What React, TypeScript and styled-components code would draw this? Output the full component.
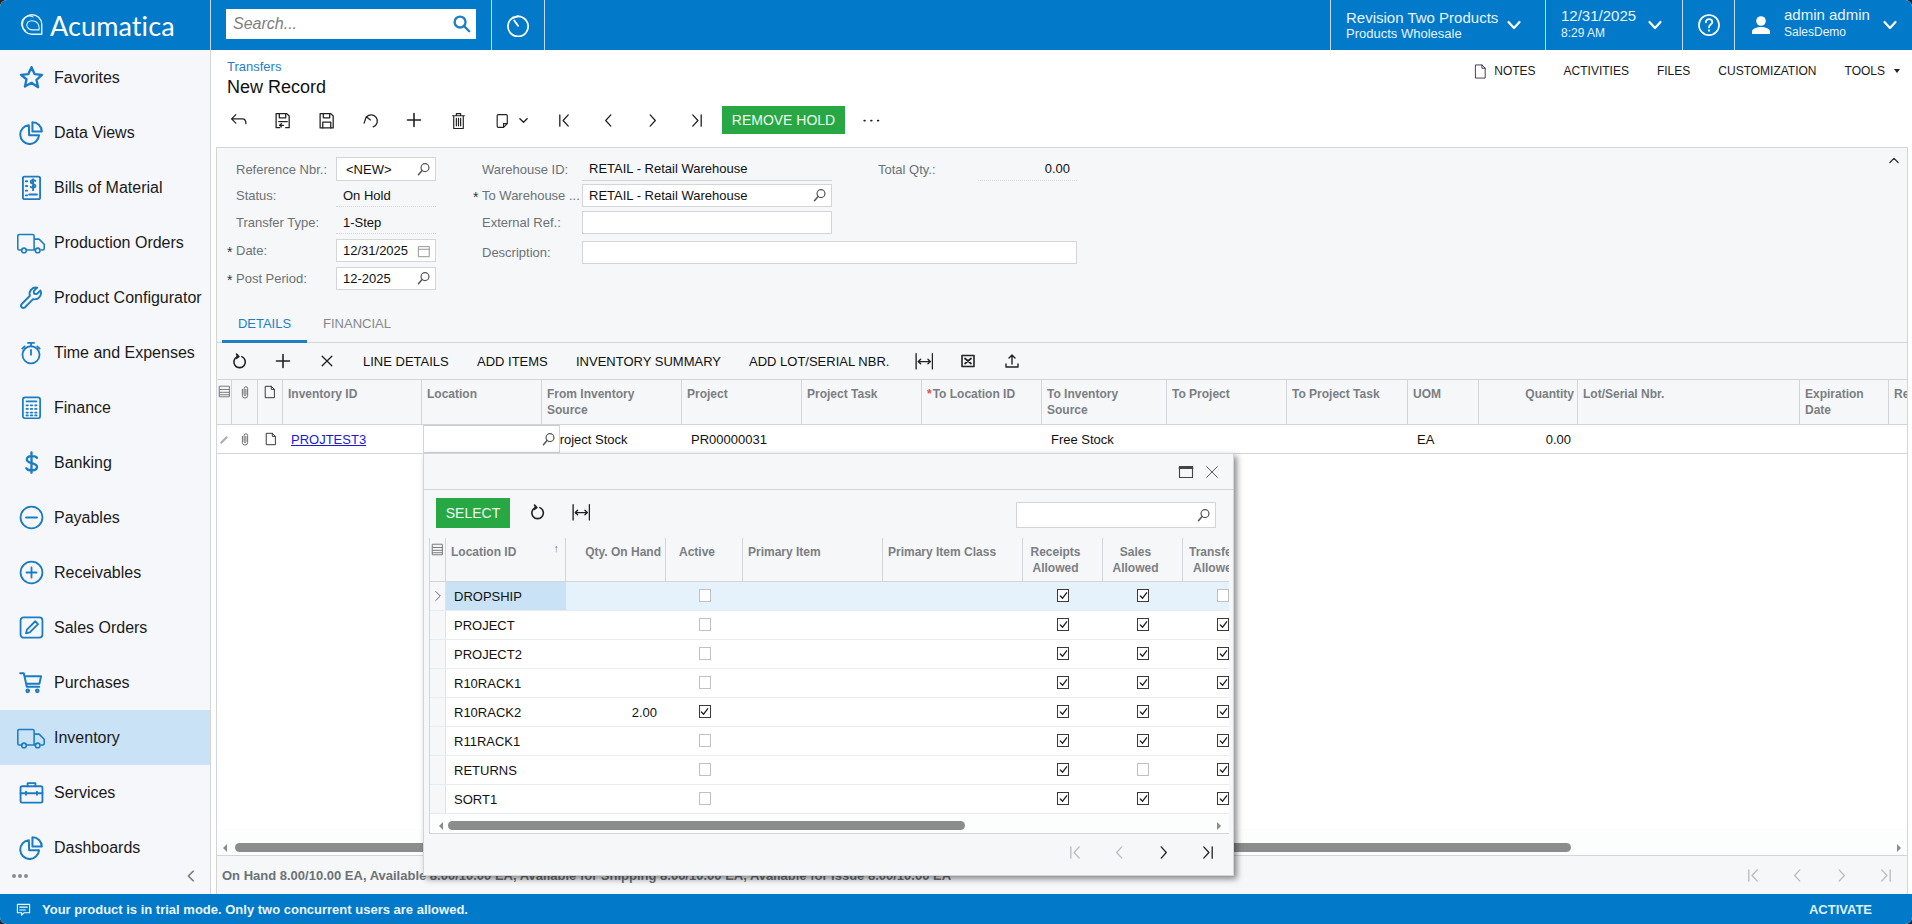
import React from "react";
import styled, { createGlobalStyle } from "styled-components";

const Global = createGlobalStyle`
  html, body { margin: 0; padding: 0; background: #26282b; overflow: hidden; }
  body { font-family: "Liberation Sans", Arial, sans-serif; font-size: 13px; color: #111; }
  * { box-sizing: border-box; }
`;

const BLUE = "#0279c9";
const LINE = "#d3d5d8";
const PANEL = "#f5f7f9";

const Frame = styled.div`
  position: relative; width: 1912px; height: 924px; display: flex; flex-direction: column;
  overflow: hidden; border-radius: 7px; background: #fff;
`;
const TopBar = styled.header`display: flex; height: 50px; background: ${BLUE}; color: #fff; flex: none;`;
const TopSection = styled.div<{ $w: number }>`
  width: ${p => p.$w}px; flex: none; display: flex; align-items: center; position: relative;
  border-left: 1px solid rgba(255,255,255,.75);
  &:first-child { border-left: none; }
`;
const TopSpacer = styled.div`flex: 1; border-left: 1px solid rgba(255,255,255,.75);`;
const LogoWrap = styled.div`display: flex; align-items: center; gap: 5px; padding-left: 19px;`;
const LogoText = styled.span`font-family: Lato, "Open Sans", sans-serif; font-size: 27px; font-weight: 400; letter-spacing: .1px; color: #fff;`;
const SearchBox = styled.div`
  width: 250px; height: 30px; margin: -3px 0 0 15px; background: #fff; display: flex; align-items: center; justify-content: space-between; padding: 0 5px 0 7px;
`;
const SearchHint = styled.span`font-size: 16px; font-style: italic; color: #7d7f82;`;
const CenterSlot = styled.div`flex: 1; display: flex; justify-content: center; align-items: center;`;
const TopTexts = styled.div<{ $pad: number; $pb: number }>`padding: 0 0 ${p => p.$pb}px ${p => p.$pad}px; flex: 1; display: flex; flex-direction: column; justify-content: center;`;
const TopMain = styled.div`font-size: 15px; line-height: 17px; white-space: nowrap; color: #e9f4fc;`;
const TopSub = styled.div<{ $s: number; $mt: number }>`font-size: ${p => p.$s}px; line-height: 17px; margin-top: ${p => p.$mt}px; white-space: nowrap; color: #e9f4fc;`;
const ChevronSlot = styled.div<{ $r: number }>`display: flex; margin-right: ${p => p.$r}px;`;
const UserSlot = styled.div`width: 49px; display: flex; justify-content: center; padding-left: 2px;`;

const Body = styled.div`flex: 1; min-height: 0; display: flex;`;
const Sidebar = styled.nav`width: 211px; flex: none; background: #f5f7fa; border-right: 1px solid ${LINE}; display: flex; flex-direction: column;`;
const NavList = styled.div`flex: 1; min-height: 0; overflow: hidden;`;
const NavItem = styled.div<{ $active?: boolean }>`
  height: 55px; display: flex; align-items: center; padding-left: 17px; font-size: 16px; color: #1a1a1a;
  background: ${p => (p.$active ? "#c9e2f6" : "transparent")};
`;
const NavIcon = styled.span`width: 28px; height: 28px; margin-right: 9px; display: flex; align-items: center; justify-content: center; flex: none; color: #1c7cc2;`;
const NavFoot = styled.div`height: 30px; flex: none; display: flex; align-items: center; justify-content: space-between; padding: 0 12px 6px 12px;`;
const NavDots = styled.span`display: flex; gap: 2px;`;
const NavDot = styled.i`width: 4px; height: 4px; border-radius: 50%; background: #8a8d90;`;

const Main = styled.main`flex: 1; min-width: 0; display: flex; flex-direction: column; padding: 0 4px 0 5px;`;
const PageHead = styled.div`height: 56px; flex: none; display: flex; justify-content: space-between; padding: 9px 8px 0 11px;`;
const Breadcrumb = styled.div`font-size: 13px; line-height: 16px; color: #1f7fc4;`;
const PageTitle = styled.h1`margin: 1px 0 0; font-size: 18px; line-height: 22px; font-weight: 400; color: #111;`;
const HeadLinks = styled.div`display: flex; gap: 28px; align-items: center; height: 26px; margin-top: -1px; font-size: 12px; color: #1a1a1a;`;
const HeadLink = styled.span`display: flex; align-items: center; gap: 6px;`;
const Caret = styled.i`width: 0; height: 0; border: 3.5px solid transparent; border-top: 4px solid #222; border-bottom: none; margin-left: 3px;`;

const Tools = styled.div`height: 41px; flex: none; display: flex; align-items: flex-start; padding-left: 0;`;
const ToolBtn = styled.span<{ $w?: number }>`width: ${p => p.$w ?? 44}px; height: 28px; flex: none; display: flex; align-items: center; justify-content: center; gap: 8px; color: #222;`;
const GreenBtn = styled.span<{ $w: number; $h: number; $ml?: number }>`
  width: ${p => p.$w}px; height: ${p => p.$h}px; flex: none; background: #28a745; color: #eef9f0; font-size: 14px; display: flex; align-items: center; justify-content: center;
  margin-left: ${p => p.$ml ?? 0}px; margin-right: ${p => p.$ml ?? 0}px;
`;
const Panel = styled.section`flex: 1; min-height: 0; display: flex; flex-direction: column; border: 1px solid ${LINE}; border-bottom: none; background: ${PANEL}; position: relative;`;
const CollapseBtn = styled.span`position: absolute; right: 7px; top: 7px; display: flex;`;

const FormArea = styled.div`height: 157px; flex: none; padding: 9px 0 0 10px; display: flex; gap: 37px;`;
const FormCol = styled.div`display: flex; flex-direction: column; gap: 3px;`;
const RightBlock = styled.div`display: flex; flex-direction: column; gap: 7px;`;
const RightTop = styled.div`display: flex; gap: 46px;`;
const Field = styled.div<{ $mt?: number; $h?: number }>`height: ${p => p.$h ?? 23}px; display: flex; align-items: center; flex: none; margin-top: ${p => p.$mt ?? 0}px;`;
const Star = styled.span`width: 9px; flex: none; font-size: 14px; color: #333; line-height: 20px; padding-top: 3px;`;
const Label = styled.span`width: 100px; flex: none; color: #6d7175; font-size: 13px; white-space: nowrap; overflow: hidden;`;
const InputBox = styled.div<{ $w: number; $pad?: number }>`
  width: ${p => p.$w}px; height: 100%; background: #fff; border: 1px solid ${LINE}; display: flex; align-items: center; justify-content: space-between;
  padding: 0 4px 0 ${p => p.$pad ?? 6}px; font-size: 13px; color: #111;
`;
const ReadValue = styled.div<{ $w: number; $line: string; $right?: boolean }>`
  width: ${p => p.$w}px; height: 100%; display: flex; align-items: center; padding: 0 7px; border-bottom: 1px ${p => p.$line} ${LINE}; font-size: 13px;
  justify-content: ${p => (p.$right ? "flex-end" : "flex-start")};
`;

const Tabs = styled.div`height: 38px; flex: none; display: flex; border-bottom: 1px solid ${LINE}; padding-left: 5px; margin-bottom: 0;`;
const Tab = styled.div<{ $active?: boolean; $w: number }>`
  width: ${p => p.$w}px; height: 38px; font-size: 13px; display: flex; align-items: flex-start; justify-content: center; padding-top: 11px;
  color: ${p => (p.$active ? "#1f7fc4" : "#85888b")}; border-bottom: 3px solid ${p => (p.$active ? "#1f7fc4" : "transparent")};
`;
const GridTools = styled.div`height: 36px; flex: none; display: flex; align-items: center; padding-left: 0; font-size: 13px; color: #111;`;
const TextTool = styled.span<{ $w: number }>`width: ${p => p.$w}px; flex: none; white-space: nowrap;`;

const GridWrap = styled.div`flex: 1; min-height: 0; display: flex; flex-direction: column; background: #fff; border-top: 1px solid ${LINE};`;
const GridRow = styled.div<{ $cols: string; $h: number; $bg?: string; $line?: string }>`
  display: grid; grid-template-columns: ${p => p.$cols}; height: ${p => p.$h}px; flex: none; background: ${p => p.$bg ?? "#fff"};
  border-bottom: 1px solid ${p => p.$line ?? LINE}; overflow: hidden;
`;
const HeadCell = styled.div<{ $align?: string }>`
  padding: 6px 3px 0 5px; font-size: 12px; line-height: 16px; font-weight: 700; color: #7b7e82; border-right: 1px solid ${LINE}; overflow: hidden; white-space: nowrap; position: relative;
  text-align: ${p => p.$align ?? "left"};
  display: flex; flex-direction: column;
`;
const ReqMark = styled.span`color: #d9534f; margin-right: 1px;`;
const IconCell = styled.div<{ $bg?: string }>`display: flex; align-items: center; justify-content: center; background: ${p => p.$bg ?? "transparent"}; color: #555; position: relative;`;
const IconHeadCell = styled(IconCell)`align-items: flex-start; padding-top: 5px; border-right: 1px solid ${LINE}; background: ${PANEL};`;
const DataCell = styled.div<{ $align?: string; $pr?: number; $pl?: number }>`
  display: flex; align-items: center; font-size: 13px; white-space: nowrap; overflow: visible; position: relative; color: #111;
  padding: 0 ${p => p.$pr ?? 8}px 0 ${p => p.$pl ?? 9}px;
  justify-content: ${p => p.$align ?? "flex-start"};
`;
const RowLink = styled.a`color: #1a1ad6; text-decoration: underline; font-size: 13px;`;
const LocationEdit = styled.div`
  position: absolute; left: 1px; top: 0; width: 137px; height: 28px; background: #fff; border: 1px solid ${LINE}; border-top-color: #c9cbce; display: flex; align-items: center; justify-content: flex-end; padding-right: 3px; z-index: 1;
`;
const GridFill = styled.div`flex: 1; min-height: 0;`;
const ScrollTrack = styled.div<{ $h: number; $pl: number; $pr: number; $top: number }>`
  height: ${p => p.$h}px; flex: none; display: flex; align-items: center; justify-content: space-between; padding: ${p => p.$top}px ${p => p.$pr}px 0 ${p => p.$pl}px; background: #fcfdfd;
`;
const ScrollSide = styled.div<{ $gap: number }>`display: flex; align-items: center; gap: ${p => p.$gap}px;`;
const ScrollThumb = styled.div<{ $w: number }>`width: ${p => p.$w}px; height: 9px; border-radius: 5px; background: #8c8c8c;`;
const ArrowGlyph = styled.i<{ $dir: "l" | "r" }>`
  width: 0; height: 0; border-top: 4px solid transparent; border-bottom: 4px solid transparent;
  ${p => (p.$dir === "l" ? "border-right: 4px solid #8c8c8c;" : "border-left: 4px solid #8c8c8c;")}
`;
const StatusFoot = styled.div`height: 39px; flex: none; border-top: 1px solid ${LINE}; display: flex; align-items: center; justify-content: space-between; padding: 0 0 0 5px;`;
const StatusText = styled.span`font-size: 13px; font-weight: 700; color: #6d7175; white-space: nowrap;`;
const Pager = styled.div`display: flex; color: #b9bcbf;`;
const PagerBtn = styled.span<{ $on?: boolean }>`width: 44px; height: 20px; display: flex; align-items: center; justify-content: center; color: ${p => (p.$on ? "#222" : "#b9bcbf")};`;

const TrialBar = styled.footer`height: 30px; flex: none; background: ${BLUE}; color: #fff; display: flex; align-items: center; justify-content: space-between; padding: 0 40px 0 16px;`;
const TrialMsg = styled.span`display: flex; align-items: center; gap: 11px; font-size: 13px; font-weight: 700; color: #eaf5fd;`;
const ActivateBtn = styled.span`font-size: 13px; font-weight: 700; color: #dff3ff;`;

const Dialog = styled.div`
  position: absolute; left: 423px; top: 453px; width: 811px; height: 423px; background: ${PANEL}; border: 1px solid ${LINE}; box-shadow: 3px 3px 6px rgba(0,0,0,.45); display: flex; flex-direction: column; z-index: 3;
`;
const DialogTitle = styled.div`height: 36px; flex: none; border-bottom: 1px solid ${LINE}; display: flex; align-items: center; justify-content: flex-end; gap: 11px; padding: 0 14px 0 0; color: #444;`;
const DialogTools = styled.div`height: 48px; flex: none; display: flex; align-items: flex-start; padding: 8px 17px 0 12px; position: relative;`;
const DialogSearch = styled.div`margin-left: auto; margin-top: 4px; width: 200px; height: 26px; background: #fff; border: 1px solid ${LINE}; display: flex; align-items: center; justify-content: flex-end; padding-right: 4px;`;
const DialogGrid = styled.div`margin: 0 4px 0 5px; flex: none; border: 1px solid ${LINE}; border-top: none; border-right: none; overflow: hidden; background: #fff;`;
const CenterHead = styled(HeadCell)`align-items: center; padding: 6px 14px 0 0;`;
const RightHead = styled(HeadCell)`align-items: flex-end; padding-right: 4px;`;
const ClippedHead = styled(HeadCell)`align-items: flex-start; padding-left: 6px;`;
const ClippedLine = styled.span`padding-left: 4px;`;
const SortMark = styled.span`position: absolute; right: 6px; top: 2px; font-size: 11px; color: #777; font-weight: 400;`;
const Indicator = styled.div<{ $bg: string }>`background: ${p => p.$bg}; border-right: 1px solid #dfe3e7; display: flex; align-items: center; justify-content: center;`;
const LocCell = styled.div<{ $on: boolean }>`display: flex; align-items: center; padding-left: 8px; font-size: 13px; background: ${p => (p.$on ? "#c9e2f6" : "transparent")};`;
const CheckCell = styled.div`display: flex; align-items: center; justify-content: center; padding-bottom: 2px;`;
const Check = styled.span<{ $on: boolean }>`
  width: 12px; height: 13px; flex: none; background: #fff; border: 1px solid ${p => (p.$on ? "#3a3a3a" : "#bfc1c4")}; display: flex; align-items: center; justify-content: center; color: #222;
`;
const DialogPager = styled.div`flex: 1; display: flex; justify-content: flex-end; padding: 8px 4px 0 0;`;

const Svg = styled.svg`display: block; flex: none; fill: none; stroke: currentColor; stroke-linecap: round; stroke-linejoin: round;`;

type IP = { s?: number; w?: number; h?: number; sw?: number; vb?: string; children: React.ReactNode; color?: string };
const I = ({ s = 16, w, h, sw = 1.2, vb = "0 0 16 16", children, color }: IP) => (
  <Svg width={w ?? s} height={h ?? s} viewBox={vb} strokeWidth={sw} style={color ? { color } : undefined}>{children}</Svg>
);

const Lens = ({ c = "#555" }: { c?: string }) => (
  <I s={15} color={c} sw={1.3}><circle cx="9.6" cy="6" r="4.2" /><path d="M6.5 9 2.6 13.6" strokeWidth="1.6" /></I>
);
const Chevron = () => <I s={16} sw={2.2} color="#fff"><path d="M2.5 5 8 11l5.5-6" /></I>;
const First = () => <I s={15} sw={1.4}><path d="M3 2v12M12 2 6.5 8l5.5 6" /></I>;
const Prev = () => <I s={15} sw={1.4}><path d="M10.5 2 5 8l5.5 6" /></I>;
const Next = () => <I s={15} sw={1.4}><path d="M5.5 2 11 8l-5.5 6" /></I>;
const Last = () => <I s={15} sw={1.4}><path d="M13 2v12M4 2l5.5 6L4 14" /></I>;
const Refresh = () => <I s={17} sw={1.5}><path d="M6 3.4a5.4 5.4 0 1 0 4.2 0" /><path d="M5.2 1 7.4 3.4 5 5" fill="currentColor" /></I>;
const FitCols = () => <I s={18} sw={1.2}><path d="M1 1.500v13.500M15.500 1.500v13.500M3 8.500h10.500" /><path d="M5 6.500l-2 2 2 2M11.500 6.500l2 2-2 2" /></I>;
const Plus = () => <I s={16} sw={1.6}><path d="M8 1.5v13M1.5 8h13" /></I>;
const Cross = () => <I s={14} sw={1.5}><path d="M2.5 2.5l11 11M13.5 2.5l-11 11" /></I>;
const ColCfg = () => <I s={13} sw={1.2} color="#777"><rect x="2" y="1.5" width="12" height="13" /><path d="M2 5.500h12M2 9h12M2 12h12" /></I>;
const Clip = () => <I s={14} sw={1.1} color="#666"><path d="M5 5v7a3 3 0 0 0 6 0V4a2 2 0 0 0-4 0v7a1 1 0 0 0 2 0V5" /></I>;
const Doc = () => <I s={14} sw={1.1} color="#333"><path d="M3 1.5h6.5L13 5v9.5H3zM9.5 1.5V5H13" /></I>;
const Mini = () => <I s={11} sw={1.8} color="#aaa" vb="0 0 10 10"><path d="M2 8l5-5" /></I>;
const Tick = () => <I s={9} sw={1.5} vb="0 0 10 10"><path d="M1.5 5.5l2.5 2.5 4.5-6" /></I>;

const navIcons: Record<string, React.ReactNode> = {
  star: <I s={25} sw={1.5}><path d="M8 1.4l2 4.4 4.7.5-3.5 3.2 1 4.7L8 11.4l-4.2 2.4 1-4.7L1.3 6.300l4.700-.5z" /></I>,
  pie: <I s={25} sw={1.3}><path d="M6.300 3.400A6 6 0 1 0 12.800 9.800H6.500z" /><path d="M8.600 1.400A6 6 0 0 1 14.600 7.400H8.600z" /></I>,
  bills: <I s={25} sw={1.2}><rect x="2.500" y="1" width="11" height="14.500" rx="1" /><path d="M4.400 4h.8M4.400 7h.8M4.400 10h.8M4.400 13h.8M6.500 12.500h5" /><path d="M10.500 3.800c-.6-.6-3-.8-3 .7s3 .9 3 2.400-2.400 1.300-3 .7M9 2.700v7" /></I>,
  truck: <I s={28} sw={1} vb="0 0 18 16"><path d="M3.200 12.500H1.500a1 1 0 0 1-1-1V3.500a1 1 0 0 1 1-1h8.500a1 1 0 0 1 1 1v9h-5M11 5.500h3.200l3.300 3.300v2.700a1 1 0 0 1-1 1h-1M11.500 12.500h.5" /><circle cx="4.500" cy="12.800" r="1.500" /><circle cx="13.300" cy="12.800" r="1.500" /></I>,
  wrench: <I s={25} sw={1.2}><path d="M13.700 3.500 11.300 5.800l-1.600-.2-.3-1.700L11.700 1.700A4 4 0 0 0 7 6.900L1.600 12.300a1.500 1.500 0 0 0 2.100 2.100L9 9A4 4 0 0 0 13.700 3.500z" /></I>,
  timer: <I s={24} sw={1.2}><circle cx="8" cy="9.200" r="5.700" /><path d="M8 9.200V6M6 1.300h4M8 1.300v2M12.200 3.600l1.600 1.500M3.800 3.600 2.200 5.100" /></I>,
  calc: <I s={23} sw={1.2}><rect x="2" y="1" width="12" height="14.500" rx="1.500" /><path d="M4.500 3.700h7" /><path d="M4.500 6.500h1M7.500 6.500h1M10.500 6.500h1M4.500 9h1M7.500 9h1M10.500 9h1M4.500 11.500h1M7.500 11.500h1M10.500 11.500h1M4.500 13.500h1M7.500 13.500h1M10.500 13.500h1" strokeWidth="1.200" /></I>,
  dollar: <I s={25} sw={1.5}><path d="M11.500 5c-.8-1.300-6.500-1.900-6.500 1.100 0 3 6.500 1.700 6.500 4.700 0 3-5.800 2.500-6.800.9M8 1.500v13" /></I>,
  minus: <I s={25} sw={1.150}><circle cx="8" cy="8" r="7" /><path d="M4.500 8h7" /></I>,
  plus: <I s={25} sw={1.150}><circle cx="8" cy="8" r="7" /><path d="M4.800 8h6.400M8 4.800v6.400" /></I>,
  edit: <I s={25} sw={1.150}><rect x="1" y="1.500" width="14" height="13" rx="2" /><path d="M4.500 11.700l.6-2.400 5.300-5.300 1.800 1.800-5.300 5.300z" /></I>,
  cart: <I s={24} sw={1.300}><path d="M.8 1.500h2.400l2 9h8.300M4 3.500h10.700l-1.100 5H5" /><circle cx="5.800" cy="13.200" r=".9" /><circle cx="12.200" cy="13.200" r=".9" /></I>,
  case: <I s={25} sw={1.200}><rect x="1" y="4" width="14" height="10.500" rx="1" /><path d="M5.500 4V2h5v2M1 8.500h14M4.500 7.500v2M11.500 7.500v2" /></I>,
};
const nav: [string, string][] = [
  ["Favorites", "star"], ["Data Views", "pie"], ["Bills of Material", "bills"], ["Production Orders", "truck"], ["Product Configurator", "wrench"],
  ["Time and Expenses", "timer"], ["Finance", "calc"], ["Banking", "dollar"], ["Payables", "minus"], ["Receivables", "plus"], ["Sales Orders", "edit"],
  ["Purchases", "cart"], ["Inventory", "truck"], ["Services", "case"], ["Dashboards", "pie"],
];

const mainCols = "15px 26px 25px 139px 120px 140px 120px 120px 120px 125px 120px 121px 71px 99px 222px 89px 60px";
const mainHead: { t: string[]; a?: string; req?: boolean }[] = [
  { t: ["Inventory ID"] }, { t: ["Location"] }, { t: ["From Inventory", "Source"] }, { t: ["Project"] }, { t: ["Project Task"] }, { t: ["To Location ID"], req: true },
  { t: ["To Inventory", "Source"] }, { t: ["To Project"] }, { t: ["To Project Task"] }, { t: ["UOM"] }, { t: ["Quantity"], a: "right" }, { t: ["Lot/Serial Nbr."] }, { t: ["Expiration", "Date"] }, { t: ["Re"] },
];

const dlgCols = "16px 120px 100px 77px 140px 140px 80px 80px 80px";
const dlgRows: [string, string, boolean, boolean, boolean, boolean][] = [
  ["DROPSHIP", "", false, true, true, false], ["PROJECT", "", false, true, true, true], ["PROJECT2", "", false, true, true, true], ["R10RACK1", "", false, true, true, true],
  ["R10RACK2", "2.00", true, true, true, true], ["R11RACK1", "", false, true, true, true], ["RETURNS", "", false, true, false, true], ["SORT1", "", false, true, true, true],
];

const CheckBox = ({ on }: { on: boolean }) => <Check $on={on}>{on ? <Tick /> : null}</Check>;

export default function App() {
  return (
    <Frame>
      <Global />
      <TopBar>
        <TopSection $w={210}>
          <LogoWrap>
            <I s={26} sw={1} color="#e8f3fb" vb="0 0 24 24">
              <path d="M21 19V11A9 9 0 1 0 12 20.500H21z" strokeWidth="1.300" />
              <path d="M6 17A7 7 0 0 1 13 4.500" /><path d="M18.500 14A6.500 6.500 0 0 0 8 9.500c-2 3 0 7 4.500 7H18.500z" />
            </I>
            <LogoText>Acumatica</LogoText>
          </LogoWrap>
        </TopSection>
        <TopSection $w={281}>
          <SearchBox>
            <SearchHint>Search...</SearchHint>
            <I s={19} sw={2} color="#1f7fc4"><circle cx="6.800" cy="6.800" r="4.600" /><path d="M10.200 10.200 14.500 14.500" /></I>
          </SearchBox>
        </TopSection>
        <TopSection $w={53}>
          <CenterSlot>
            <I s={24} sw={1.200} color="#fff"><path d="M4.500 3.200a6.700 6.700 0 1 0 3.500-1" /><path d="M8 2.200 4.500 3.200M8 8.500 5.500 5" strokeWidth="1.300" /></I>
          </CenterSlot>
        </TopSection>
        <TopSpacer />
        <TopSection $w={215}>
          <TopTexts $pad={15} $pb={0}>
            <TopMain>Revision Two Products</TopMain>
            <TopSub $s={13} $mt={-1}>Products Wholesale</TopSub>
          </TopTexts>
          <ChevronSlot $r={23}><Chevron /></ChevronSlot>
        </TopSection>
        <TopSection $w={137}>
          <TopTexts $pad={15} $pb={2}>
            <TopMain>12/31/2025</TopMain>
            <TopSub $s={12} $mt={1}>8:29 AM</TopSub>
          </TopTexts>
          <ChevronSlot $r={19}><Chevron /></ChevronSlot>
        </TopSection>
        <TopSection $w={52}>
          <CenterSlot>
            <I s={24} sw={1.100} color="#fff"><circle cx="8" cy="8" r="6.700" /><path d="M5.900 6.200c0-3 4.300-2.700 4.300-.2 0 1.800-2.200 1.600-2.200 3.500M8 11.500v.4" strokeWidth="1.200" /></I>
          </CenterSlot>
        </TopSection>
        <TopSection $w={178}>
          <UserSlot>
            <I s={22} sw={0} color="#fff" vb="0 0 22 22"><circle cx="11" cy="7" r="4.800" fill="#fff" /><path d="M2 20v-2.500c0-3 5-4.500 9-4.500s9 1.500 9 4.500V20z" fill="#fff" /></I>
          </UserSlot>
          <TopTexts $pad={0} $pb={4}>
            <TopMain>admin admin</TopMain>
            <TopSub $s={12} $mt={1}>SalesDemo</TopSub>
          </TopTexts>
          <ChevronSlot $r={14}><Chevron /></ChevronSlot>
        </TopSection>
      </TopBar>

      <Body>
        <Sidebar>
          <NavList>
            {nav.map(([name, icon]) => (
              <NavItem key={name} $active={name === "Inventory"}>
                <NavIcon>{navIcons[icon]}</NavIcon>
                {name}
              </NavItem>
            ))}
          </NavList>
          <NavFoot>
            <NavDots><NavDot /><NavDot /><NavDot /></NavDots>
            <I s={14} sw={1.800} color="#777"><path d="M10.500 2.500 5 8l5.500 5.500" /></I>
          </NavFoot>
        </Sidebar>

        <Main>
          <PageHead>
            <div>
              <Breadcrumb>Transfers</Breadcrumb>
              <PageTitle>New Record</PageTitle>
            </div>
            <HeadLinks>
              <HeadLink><I s={15} sw={.9} color="#2a1a3a"><path d="M3 1h6.500L13 4.500V15H3zM9.500 1v3.500H13" /></I>NOTES</HeadLink>
              <HeadLink>ACTIVITIES</HeadLink>
              <HeadLink>FILES</HeadLink>
              <HeadLink>CUSTOMIZATION</HeadLink>
              <HeadLink>TOOLS <Caret /></HeadLink>
            </HeadLinks>
          </PageHead>

          <Tools>
            <ToolBtn><I s={17} sw={1.200}><path d="M1.500 6.500h10c2.300 0 3.500 1.700 3.500 4.500M1.500 6.500l4-4M1.500 6.500l4 4" /></I></ToolBtn>
            <ToolBtn><I s={17} sw={1.200}><path d="M5.500 14.800H2V1.500h10l2.300 2.300v11H11" /><path d="M5 1.500v4h6v-4M4.500 9h8M9 12.500H5.500M7 11l-1.800 1.500L7 14" /></I></ToolBtn>
            <ToolBtn><I s={17} sw={1.200}><path d="M2 1.500h10l2.300 2.300v11.200H2z" /><path d="M5 1.500v4h6v-4M4.500 15V9.500h7.500V15" /></I></ToolBtn>
            <ToolBtn><I s={17} sw={1.200}><path d="M2 10.500 4 4.500l4 3" /><path d="M4.200 4.800A5.800 5.800 0 1 1 10.500 14" /></I></ToolBtn>
            <ToolBtn><Plus /></ToolBtn>
            <ToolBtn><I s={17} sw={1.100}><path d="M2.500 3.500h11M6 3.500V1.500h4v2M3.500 3.500v12h9v-12M6 6v7M8 6v7M10 6v7" /></I></ToolBtn>
            <ToolBtn $w={62}>
              <I s={17} sw={1.100}><path d="M4 2.500h7.500a1 1 0 0 1 1 1V11l-3.500 3.500H4a1 1 0 0 1-1-1v-10a1 1 0 0 1 1-1zM9 14.500V11h3.500" /></I>
              <I s={9} sw={1.500} vb="0 0 10 10"><path d="M1 3l4 4 4-4" /></I>
            </ToolBtn>
            <ToolBtn $w={44}><First /></ToolBtn>
            <ToolBtn><Prev /></ToolBtn>
            <ToolBtn><Next /></ToolBtn>
            <ToolBtn><Last /></ToolBtn>
            <GreenBtn $w={123} $h={28} $ml={4}>REMOVE HOLD</GreenBtn>
            <ToolBtn><I s={18} sw={1.600}><path d="M2 8.500h.6M8 8.500h.6M14 8.500h.6" /></I></ToolBtn>
          </Tools>

          <Panel>
            <CollapseBtn><I s={12} sw={1.800} color="#333"><path d="M2.500 10 8 4.500 13.500 10" /></I></CollapseBtn>
            <FormArea>
              <FormCol>
                <Field $h={24}><Star /><Label>Reference Nbr.:</Label><InputBox $w={100} $pad={9}>&lt;NEW&gt;<Lens /></InputBox></Field>
                <Field><Star /><Label>Status:</Label><ReadValue $w={100} $line="dotted">On Hold</ReadValue></Field>
                <Field $mt={1}><Star /><Label>Transfer Type:</Label><ReadValue $w={100} $line="dotted">1-Step</ReadValue></Field>
                <Field $mt={2}><Star>*</Star><Label>Date:</Label><InputBox $w={100}>12/31/2025<I s={14} sw={1} color="#888"><path d="M2 3h12v11.500H2zM2 6h12" /></I></InputBox></Field>
                <Field $mt={2}><Star>*</Star><Label>Post Period:</Label><InputBox $w={100}>12-2025<Lens /></InputBox></Field>
              </FormCol>
              <RightBlock>
                <RightTop>
                  <FormCol>
                    <Field $h={24}><Star /><Label>Warehouse ID:</Label><ReadValue $w={250} $line="solid">RETAIL - Retail Warehouse</ReadValue></Field>
                    <Field><Star>*</Star><Label>To Warehouse ...</Label><InputBox $w={250}>RETAIL - Retail Warehouse<Lens /></InputBox></Field>
                    <Field $mt={1}><Star /><Label>External Ref.:</Label><InputBox $w={250} /></Field>
                  </FormCol>
                  <FormCol>
                    <Field $h={24}><Label>Total Qty.:</Label><ReadValue $w={99} $line="dotted" $right>0.00</ReadValue></Field>
                  </FormCol>
                </RightTop>
                <Field><Star /><Label>Description:</Label><InputBox $w={495} /></Field>
              </RightBlock>
            </FormArea>

            <Tabs>
              <Tab $active $w={85}>DETAILS</Tab>
              <Tab $w={100}>FINANCIAL</Tab>
            </Tabs>

            <GridTools>
              <ToolBtn><Refresh /></ToolBtn>
              <ToolBtn><Plus /></ToolBtn>
              <ToolBtn><Cross /></ToolBtn>
              <TextTool $w={14} />
              <TextTool $w={114}>LINE DETAILS</TextTool>
              <TextTool $w={99}>ADD ITEMS</TextTool>
              <TextTool $w={173}>INVENTORY SUMMARY</TextTool>
              <TextTool $w={153}>ADD LOT/SERIAL NBR.</TextTool>
              <ToolBtn><FitCols /></ToolBtn>
              <ToolBtn><I s={16} sw={1.600}><rect x="2" y="2.500" width="12" height="11" /><path d="M5 5.500l6 5M11 5.500l-6 5" strokeWidth="1.700" /></I></ToolBtn>
              <ToolBtn><I s={16} sw={1.400}><path d="M8 11V2.500M5 5l3-3 3 3M2 11v3h12v-3" /></I></ToolBtn>
            </GridTools>

            <GridWrap>
              <GridRow $cols={mainCols} $h={45} $bg={PANEL}>
                <IconHeadCell><ColCfg /></IconHeadCell>
                <IconHeadCell><Clip /></IconHeadCell>
                <IconHeadCell><Doc /></IconHeadCell>
                {mainHead.map(h => (
                  <HeadCell key={h.t[0]} $align={h.a}>
                    {h.t.map((l, i) => <span key={l}>{i === 0 && h.req ? <ReqMark>*</ReqMark> : null}{l}</span>)}
                  </HeadCell>
                ))}
              </GridRow>
              <GridRow $cols={mainCols} $h={29}>
                <IconCell><Mini /></IconCell>
                <IconCell><Clip /></IconCell>
                <IconCell><Doc /></IconCell>
                <DataCell $pl={8}><RowLink>PROJTEST3</RowLink></DataCell>
                <DataCell><LocationEdit><Lens /></LocationEdit></DataCell>
                <DataCell>Project Stock</DataCell>
                <DataCell>PR00000031</DataCell>
                <DataCell />
                <DataCell />
                <DataCell>Free Stock</DataCell>
                <DataCell />
                <DataCell />
                <DataCell $pl={9}>EA</DataCell>
                <DataCell $align="flex-end" $pr={7}>0.00</DataCell>
                <DataCell />
                <DataCell />
                <DataCell />
              </GridRow>
              <GridFill />
              <ScrollTrack $h={26} $pl={6} $pr={6} $top={11}>
                <ScrollSide $gap={8}><ArrowGlyph $dir="l" /><ScrollThumb $w={1336} /></ScrollSide>
                <ArrowGlyph $dir="r" />
              </ScrollTrack>
            </GridWrap>
            <StatusFoot>
              <StatusText>On Hand 8.00/10.00 EA, Available 8.00/10.00 EA, Available for Shipping 8.00/10.00 EA, Available for Issue 8.00/10.00 EA</StatusText>
              <Pager>
                <PagerBtn><First /></PagerBtn><PagerBtn><Prev /></PagerBtn><PagerBtn><Next /></PagerBtn><PagerBtn><Last /></PagerBtn>
              </Pager>
            </StatusFoot>
          </Panel>
        </Main>
      </Body>

      <TrialBar>
        <TrialMsg>
          <I s={15} sw={1.200} color="#fff"><path d="M1.500 2.500h13v9H8.500l-2.500 2.500v-2.500H1.500zM4 5.500h8M4 8.500h6" /></I>
          Your product is in trial mode. Only two concurrent users are allowed.
        </TrialMsg>
        <ActivateBtn>ACTIVATE</ActivateBtn>
      </TrialBar>

      <Dialog>
        <DialogTitle>
          <I s={16} sw={1.100} color="#444"><path d="M1.500 2.500h13v11h-13z" /><path d="M1.500 4h13" strokeWidth="2" /></I>
          <I s={14} sw={1.100} color="#555"><path d="M2 2l12 12M14 2 2 14" /></I>
        </DialogTitle>
        <DialogTools>
          <GreenBtn $w={74} $h={30}>SELECT</GreenBtn>
          <ToolBtn $w={54}><Refresh /></ToolBtn>
          <ToolBtn $w={34}><FitCols /></ToolBtn>
          <DialogSearch><Lens /></DialogSearch>
        </DialogTools>
        <DialogGrid>
          <GridRow $cols={dlgCols} $h={44} $bg={PANEL}>
            <IconHeadCell><ColCfg /></IconHeadCell>
            <HeadCell>Location ID<SortMark>↑</SortMark></HeadCell>
            <RightHead>Qty. On Hand</RightHead>
            <CenterHead>Active</CenterHead>
            <HeadCell>Primary Item</HeadCell>
            <HeadCell>Primary Item Class</HeadCell>
            <CenterHead><span>Receipts</span><span>Allowed</span></CenterHead>
            <CenterHead><span>Sales</span><span>Allowed</span></CenterHead>
            <ClippedHead><span>Transfer</span><ClippedLine>Allowed</ClippedLine></ClippedHead>
          </GridRow>
          {dlgRows.map((r, i) => {
            const bg = i === 0 ? "#e6f2fb" : "#fff";
            return (
              <GridRow key={r[0]} $cols={dlgCols} $h={29} $bg={bg} $line="#e6ecf1">
                <Indicator $bg={PANEL}>{i === 0 ? <I s={12} sw={1.200} color="#555"><path d="M5 2l6 6-6 6" /></I> : null}</Indicator>
                <LocCell $on={i === 0}>{r[0]}</LocCell>
                <DataCell $align="flex-end" $pr={9}>{r[1]}</DataCell>
                <CheckCell><CheckBox on={r[2]} /></CheckCell>
                <div />
                <div />
                <CheckCell><CheckBox on={r[3]} /></CheckCell>
                <CheckCell><CheckBox on={r[4]} /></CheckCell>
                <CheckCell><CheckBox on={r[5]} /></CheckCell>
              </GridRow>
            );
          })}
          <ScrollTrack $h={19} $pl={9} $pr={8} $top={4}>
            <ScrollSide $gap={5}><ArrowGlyph $dir="l" /><ScrollThumb $w={517} /></ScrollSide>
            <ArrowGlyph $dir="r" />
          </ScrollTrack>
        </DialogGrid>
        <DialogPager>
          <PagerBtn><First /></PagerBtn><PagerBtn><Prev /></PagerBtn><PagerBtn $on><Next /></PagerBtn><PagerBtn $on><Last /></PagerBtn>
        </DialogPager>
      </Dialog>
    </Frame>
  );
}
